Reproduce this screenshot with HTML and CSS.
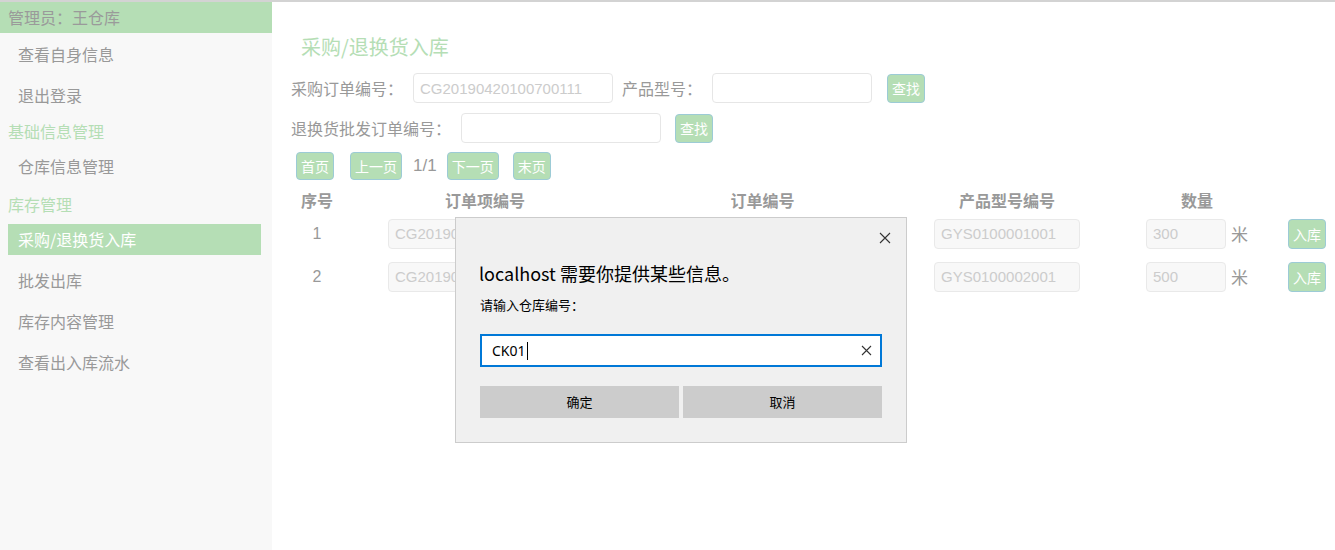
FILE: index.html
```html
<!DOCTYPE html>
<html lang="zh">
<head>
<meta charset="utf-8">
<title>采购/退换货入库</title>
<link rel="stylesheet" href="styles.css">
</head>
<body>
<div class="topline"></div>
<div class="app">
  <aside class="sidebar">
    <div class="admin">管理员：王仓库</div>
    <div class="nav-item first">查看自身信息</div>
    <div class="nav-item">退出登录</div>
    <div class="nav-head">基础信息管理</div>
    <div class="nav-item">仓库信息管理</div>
    <div class="nav-head second">库存管理</div>
    <div class="nav-item active">采购/退换货入库</div>
    <div class="nav-item">批发出库</div>
    <div class="nav-item">库存内容管理</div>
    <div class="nav-item">查看出入库流水</div>
  </aside>
  <main class="main">
    <h1 class="title">采购/退换货入库</h1>
    <div class="form-row">
      <span class="label">采购订单编号：</span>
      <input class="field w200" type="text" placeholder="CG20190420100700111">
      <span class="label">产品型号：</span>
      <input class="field w160" type="text">
      <button class="btn btn-search1">查找</button>
    </div>
    <div class="form-row row2">
      <span class="label">退换货批发订单编号：</span>
      <input class="field w200" type="text">
      <button class="btn btn-search2">查找</button>
    </div>
    <div class="pager">
      <button class="btn">首页</button>
      <button class="btn">上一页</button>
      <span class="page-num">1/1</span>
      <button class="btn">下一页</button>
      <button class="btn btn-last">末页</button>
    </div>
    <div class="table">
      <div class="th">序号</div>
      <div class="th">订单项编号</div>
      <div class="th">订单编号</div>
      <div class="th">产品型号编号</div>
      <div class="th">数量</div>
      <div class="th"></div>

      <div class="td num">1</div>
      <div class="td"><input class="cell w194" type="text" value="CG201904201007001110001" disabled></div>
      <div class="td"><input class="cell w200" type="text" value="CG20190420100700111" disabled></div>
      <div class="td"><input class="cell w146" type="text" value="GYS0100001001" disabled></div>
      <div class="td"><input class="cell w80" type="text" value="300" disabled><span class="unit">米</span></div>
      <div class="td"><button class="btn">入库</button></div>

      <div class="td num">2</div>
      <div class="td"><input class="cell w194" type="text" value="CG201904201007001110002" disabled></div>
      <div class="td"><input class="cell w200" type="text" value="CG20190420100700111" disabled></div>
      <div class="td"><input class="cell w146" type="text" value="GYS0100002001" disabled></div>
      <div class="td"><input class="cell w80" type="text" value="500" disabled><span class="unit">米</span></div>
      <div class="td"><button class="btn">入库</button></div>
    </div>
  </main>
</div>

<div class="dialog">
  <div class="dlg-close">
    <svg width="12" height="12" viewBox="0 0 12 12"><path d="M1 1 L11 11 M11 1 L1 11" stroke="#333" stroke-width="1.1" fill="none"/></svg>
  </div>
  <div class="dlg-title">localhost 需要你提供某些信息。</div>
  <div class="dlg-msg">请输入仓库编号：</div>
  <div class="dlg-input">
    <span class="dlg-value">CK01</span><span class="caret"></span>
    <span class="dlg-clear">
      <svg width="11" height="11" viewBox="0 0 11 11"><path d="M1 1 L10 10 M10 1 L1 10" stroke="#333" stroke-width="1.1" fill="none"/></svg>
    </span>
  </div>
  <div class="dlg-buttons">
    <div class="dlg-btn">确定</div>
    <div class="dlg-btn">取消</div>
  </div>
</div>
</body>
</html>
```

FILE: styles.css
```css
* { box-sizing: border-box; }

html, body {
  margin: 0;
  padding: 0;
  background: #ffffff;
  font-family: "Liberation Sans", "Noto Sans CJK SC", sans-serif;
  overflow: hidden;
}

.topline {
  height: 2px;
  background: #d3d3d3;
}

.app {
  display: flex;
  height: 548px;
}

/* Sidebar */
.sidebar {
  width: 272px;
  flex: none;
  background: #f8f8f8;
  font-family: "Noto Sans CJK SC", sans-serif;
  font-size: 16px;
  color: #999999;
}

.admin {
  height: 31px;
  line-height: 31px;
  padding-left: 8px;
  background: #b5deb5;
  color: #9a9a9a;
}

.nav-item {
  height: 31px;
  line-height: 31px;
  padding-left: 18px;
  margin-top: 10px;
}

.nav-item.first { margin-top: 6px; }

.nav-item.active {
  margin-left: 8px;
  width: 253px;
  padding-left: 10px;
  background: #b5deb5;
  color: #ffffff;
}

.nav-head {
  height: 20px;
  line-height: 20px;
  margin-top: 10px;
  padding-left: 8px;
  color: #b5deb5;
}

.nav-head.second { margin-top: 12px; }

/* Main */
.main {
  flex: 1;
  padding-left: 19px;
  font-family: "Noto Sans CJK SC", sans-serif;
  color: #999999;
  font-size: 16px;
}

.title {
  margin: 31px 0 0 10px;
  font-size: 20px;
  line-height: 28px;
  font-weight: normal;
  color: #b5deb5;
}

.form-row {
  display: flex;
  align-items: center;
  height: 30px;
  margin-top: 12px;
}

.form-row.row2 { margin-top: 10px; }

.label {
  line-height: 30px;
  margin-right: 10px;
}

.field {
  height: 30px;
  border: 1px solid #e6e6e6;
  border-radius: 4px;
  background: #ffffff;
  padding: 0 6px;
  font-family: "Liberation Sans", sans-serif;
  font-size: 15px;
  color: #999;
  margin-right: 9px;
  outline: none;
}

.field::placeholder { color: #cccccc; }

.w200 { width: 200px; }
.w194 { width: 194px; }
.w160 { width: 160px; }
.w146 { width: 146px; }
.w80 { width: 80px; }

.btn {
  height: 28px;
  padding: 0 4px;
  border: 1px solid #9ccbd6;
  border-radius: 4px;
  background: #b5deb5;
  color: #ffffff;
  font-family: "Noto Sans CJK SC", sans-serif;
  font-size: 14px;
  line-height: 26px;
  cursor: pointer;
}

.btn-search1 { margin-left: 6px; }
.btn-search2 { margin-left: 5px; }
.form-row .btn { height: 29px; }

.pager {
  display: flex;
  align-items: center;
  gap: 16px;
  margin: 9px 0 0 5px;
  height: 28px;
}

.page-num {
  margin: 0 -6px 0 -5px;
  font-family: "Liberation Sans", sans-serif;
  font-size: 17px;
  color: #999;
}

.btn-last { margin-left: -2px; }

/* Table */
.table {
  display: grid;
  grid-template-columns: 52px 284px 271px 218px 162px 58px;
  grid-auto-rows: 43px;
  grid-template-rows: 24px;
  margin-top: 8px;
}

.th {
  display: flex;
  align-items: center;
  justify-content: center;
  font-weight: bold;
  color: #999999;
  font-size: 16px;
}

.td {
  display: flex;
  align-items: center;
  justify-content: center;
}

.td.num {
  font-family: "Liberation Sans", sans-serif;
  font-size: 16px;
  color: #999;
}

.cell {
  height: 30px;
  border: 1px solid #e9e9e9;
  border-radius: 4px;
  background: #f8f8f8;
  padding: 0 6px;
  font-family: "Liberation Sans", sans-serif;
  font-size: 15px;
  color: #cccccc;
}

.td .btn { height: 30px; }

.unit {
  margin-left: 5px;
  font-size: 17px;
  color: #999;
}

/* Dialog */
.dialog {
  position: absolute;
  left: 455px;
  top: 217px;
  width: 452px;
  height: 226px;
  background: #f0f0f0;
  border: 1px solid #cccccc;
  font-family: "Noto Sans", "Noto Sans CJK SC", sans-serif;
  color: #000000;
}

.dlg-close {
  position: absolute;
  right: 15px;
  top: 14px;
  width: 12px;
  height: 12px;
  display: flex;
}

.dlg-title {
  margin: 42px 0 0 23px;
  font-size: 18px;
  line-height: 26px;
  font-family: "Noto Sans CJK SC", sans-serif;
}

.dlg-msg {
  margin: 9px 0 0 24px;
  font-size: 13px;
  line-height: 20px;
  font-family: "Noto Sans CJK SC", sans-serif;
}

.dlg-input {
  display: flex;
  align-items: center;
  margin: 19px 0 0 24px;
  width: 402px;
  height: 33px;
  border: 2px solid #0078d7;
  background: #ffffff;
  padding-left: 10px;
  padding-right: 8px;
}

.dlg-value {
  font-size: 14px;
  font-family: "Noto Sans", sans-serif;
}

.caret {
  width: 1px;
  height: 18px;
  background: #000;
  margin-left: 1px;
}

.dlg-clear {
  margin-left: auto;
  display: flex;
}

.dlg-buttons {
  display: flex;
  gap: 4px;
  margin: 19px 0 0 24px;
}

.dlg-btn {
  width: 199px;
  height: 32px;
  line-height: 32px;
  text-align: center;
  background: #cccccc;
  font-size: 13px;
  font-family: "Noto Sans CJK SC", sans-serif;
}
```
